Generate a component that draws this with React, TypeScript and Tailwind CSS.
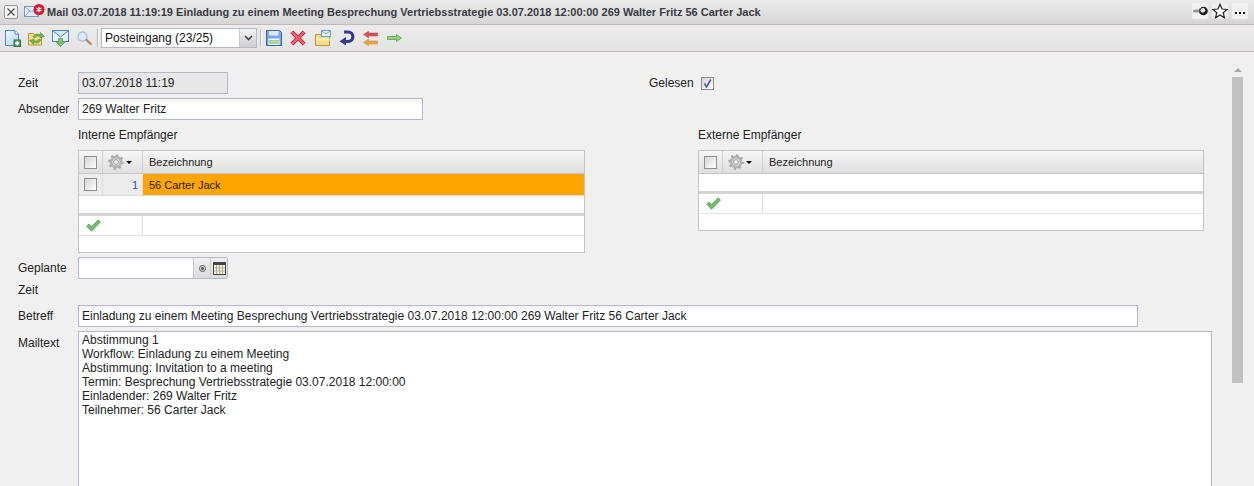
type IconProps = { className?: string };

function NewDocIcon() {
  return (
    <svg width="16" height="17" viewBox="0 0 16 17">
      <defs>
        <linearGradient id="docFill" x1="0" y1="0" x2="1" y2="1">
          <stop offset="0" stopColor="#eef6fd" />
          <stop offset="1" stopColor="#b4d4f0" />
        </linearGradient>
      </defs>
      <path d="M.5.500h9.500l3.500 3.500v11.500H.5z" fill="url(#docFill)" stroke="#4a8ac8" />
      <path d="M10 .5v3.500h3.500" fill="#fff" stroke="#4a8ac8" />
      <rect x="9" y="10" width="6.500" height="6.500" fill="#5aa564" stroke="#2f6e39" />
      <path d="M12.200 11.300v4M10.200 13.300h4" stroke="#fff" strokeWidth="1.500" />
    </svg>
  );
}

function FolderSyncIcon() {
  return (
    <svg width="17" height="15" viewBox="0 0 17 15">
      <path d="M.5 2.500h5l1 1.500h7v10H.5z" fill="#f7dd8a" stroke="#bd9338" />
      <path d="M5 6c2-3.500 5.500-3.500 7.500-2V1.500L16.500 5.500 12 7V5.500C10 4.500 8 5 7 7z" fill="#6cb84f" stroke="#478c38" strokeWidth=".5" />
      <path d="M13 9c-2 3.500-5.500 3.500-7.500 2v2.500L1.500 9.500 6 8v1.500c2 1 4 .5 5-1.500z" fill="#6cb84f" stroke="#478c38" strokeWidth=".5" />
    </svg>
  );
}

function MailDownIcon() {
  return (
    <svg width="17" height="17" viewBox="0 0 17 17">
      <rect x=".5" y=".5" width="16" height="11" fill="#e8f1fb" stroke="#4a86c6" />
      <path d="M1 1l7.500 6L16 1" fill="#d4e5f7" stroke="#4a86c6" />
      <path d="M6.500 8.500h4v3.500h2.500l-4.500 4.500L4 12h2.500z" fill="#7cc464" stroke="#4f9a3e" strokeWidth=".6" />
    </svg>
  );
}

function SearchIcon() {
  return (
    <svg width="15" height="14" viewBox="0 0 15 14">
      <circle cx="5.500" cy="5.500" r="4.500" fill="#dbe9f8" stroke="#a5c4e4" strokeWidth="1.400" />
      <path d="M9.500 9l4.300 4" stroke="#b5834f" strokeWidth="2.200" strokeLinecap="round" />
    </svg>
  );
}

function SaveIcon() {
  return (
    <svg width="16" height="16" viewBox="0 0 16 16">
      <path d="M.5.500h13l2 2v13H.5z" fill="#7aa8e0" stroke="#3564ac" />
      <rect x="3" y="1" width="9.500" height="4.500" fill="#dfe9f6" />
      <rect x="2.500" y="8.500" width="11" height="6.500" fill="#f2f6ee" />
      <path d="M3 10.800h10M3 12.800h10" stroke="#82bf7b" strokeWidth="1.300" />
    </svg>
  );
}

function DeleteIcon() {
  return (
    <svg width="16" height="16" viewBox="0 0 16 16">
      <path d="M1.800 1.800l12.400 12.400M14.200 1.800L1.800 14.200" stroke="#a8222e" strokeWidth="4" />
      <path d="M1.800 1.800l12.400 12.400M14.200 1.800L1.800 14.200" stroke="#f0616d" strokeWidth="2.400" />
    </svg>
  );
}

function FolderMailIcon() {
  return (
    <svg width="16" height="16" viewBox="0 0 16 16">
      <path d="M.5 4.500h5l1 1.500h8v9.500H.5z" fill="#f7dc85" stroke="#c2973a" />
      <path d="M1 9.500h13.500" stroke="#fbeeb8" strokeWidth="2.500" />
      <rect x="6.500" y=".5" width="9" height="6" fill="#e7f0fa" stroke="#6d9fd6" />
      <path d="M7 1l4 3 4-3" fill="none" stroke="#6d9fd6" />
    </svg>
  );
}

function UndoIcon() {
  return (
    <svg width="16" height="16" viewBox="0 0 16 16">
      <path d="M5 2h4c6.500 0 6.500 9.500 0 9.500H6" fill="none" stroke="#3a3791" strokeWidth="3.200" />
      <path d="M7 7v8.500L.5 11.300z" fill="#3a3791" />
    </svg>
  );
}

function SwapIcon() {
  return (
    <svg width="15" height="15" viewBox="0 0 15 15">
      <path d="M14.500 2H5.500V.3L.5 3.500l5 3.200V5h9z" fill="#d9535c" stroke="#b23a44" strokeWidth=".5" />
      <path d="M14.500 10H5.500V8.300L.5 11.500l5 3.200V13h9z" fill="#eea63a" stroke="#c9862a" strokeWidth=".5" />
    </svg>
  );
}

function ArrowRightIcon() {
  return (
    <svg width="15" height="8" viewBox="0 0 15 8">
      <path d="M.5 2.500h9V.5L14.500 4l-5 3.500v-2h-9z" fill="#93d07f" stroke="#5fa552" strokeWidth=".8" />
    </svg>
  );
}

function GearIcon() {
  return (
    <svg width="16" height="16" viewBox="0 0 16 16">
      <circle cx="8" cy="8" r="5" fill="none" stroke="#b5b5b5" strokeWidth="2.800" />
      <circle cx="8" cy="8" r="6.800" fill="none" stroke="#a5a5a5" strokeWidth="2" strokeDasharray="2.100 3.240" />
      <circle cx="8" cy="8" r="2.400" fill="#f0f0f0" stroke="#9a9a9a" />
    </svg>
  );
}

function CheckIcon() {
  return (
    <svg width="15" height="13" viewBox="0 0 15 13">
      <path d="M.7 7.300L3 5l2.500 2.600L12.200.8 14.500 3l-9 9.300z" fill="#74bd6c" stroke="#4a9450" strokeWidth=".7" />
    </svg>
  );
}

function CalendarIcon() {
  return (
    <svg width="13" height="13" viewBox="0 0 13 13">
      <rect x=".5" y=".5" width="12" height="12" fill="#f3f0d6" stroke="#444" />
      <rect x="1" y="1" width="11" height="2" fill="#444" />
      <path d="M3.500 3v9M6.500 3v9M9.500 3v9M1 6h11M1 9h11" stroke="#a5a58c" strokeWidth=".8" />
    </svg>
  );
}

function PinIcon() {
  return (
    <svg width="15" height="10" viewBox="0 0 15 10">
      <rect x="0" y="3.500" width="8" height="3" rx="1.500" fill="#9a9a9a" />
      <rect x="6" y="2.500" width="3" height="5" fill="#8a8a8a" />
      <circle cx="10.500" cy="5" r="4.300" fill="#1f1f1f" />
      <circle cx="9.800" cy="4.300" r="2.400" fill="#e5e5e5" />
    </svg>
  );
}

function StarIcon() {
  return (
    <svg width="16" height="16" viewBox="0 0 16 16">
      <path d="M8 1.300l2 4.700 5 .4-3.800 3.300 1.200 5L8 12l-4.400 2.700 1.200-5L1 6.400 6 6z" fill="#fff" stroke="#222" strokeWidth="1.200" />
    </svg>
  );
}

function MailTitleIcon() {
  return (
    <svg width="21" height="13" viewBox="0 0 21 13" className="-mt-[3px]">
      <rect x=".5" y="2.500" width="14" height="10" fill="#e4eefa" stroke="#6d9ad2" />
      <path d="M1 3l6.500 5L14 3M1 12l4.500-5M14 12l-4.500-5" fill="none" stroke="#6d9ad2" strokeWidth=".8" />
      <circle cx="15" cy="5.500" r="5.500" fill="#e3142b" />
      <path d="M15 2.700v5.600M12.600 4.100l4.800 2.800M17.400 4.100l-4.800 2.800" stroke="#fff" strokeWidth="1.200" />
    </svg>
  );
}

function CheckBox({ checked, className }: IconProps & { checked?: boolean }) {
  return (
    <span
      className={`flex h-[13px] w-[13px] shrink-0 items-center justify-center border border-[#8f8f8f] bg-gradient-to-br from-[#d4d4d4] to-white ${className ?? ''}`}
    >
      {checked && (
        <svg width="9" height="9" viewBox="0 0 9 9">
          <path d="M1.500 4.500L3.500 8 7.800 .5" fill="none" stroke="#4a5ea8" strokeWidth="1.600" />
        </svg>
      )}
    </span>
  );
}

function ToolSeparator({ className }: IconProps) {
  return <span className={`h-[18px] w-[2px] border-x border-l-[#b5b5b5] border-r-white ${className ?? ''}`} />;
}

function Recipients({
  title,
  rows,
  widthClass,
}: {
  title: string;
  rows: string[];
  widthClass: string;
}) {
  return (
    <div className={widthClass}>
      <div className="h-[22px] text-[12px] leading-[14px] text-[#222]">{title}</div>
      <div className="border border-[#c4c4c4] bg-white">
        <div className="flex h-[23px] border-b border-[#c8c8c8] bg-gradient-to-b from-[#f6f6f6] to-[#dfdfdf]">
          <div className="flex w-[24px] items-center justify-center border-r border-[#cfcfcf]">
            <CheckBox />
          </div>
          <div className="flex w-[40px] items-center gap-[2px] border-r border-[#cfcfcf] pl-[5px]">
            <GearIcon />
            <span className="h-0 w-0 border-x-[3px] border-t-[3px] border-x-transparent border-t-black" />
          </div>
          <div className="flex items-center pl-[6px] text-[11px] text-[#222]">Bezeichnung</div>
        </div>
        {rows.map((row) => (
          <div key={row} className="flex h-[22px] border-b border-[#dcdcdc]">
            <div className="flex w-[24px] items-center justify-center border-r border-[#dcdcdc] bg-[#ececec]">
              <CheckBox />
            </div>
            <div className="flex w-[40px] items-center justify-end border-r border-[#dcdcdc] bg-[#ececec] pr-[4px] pt-[1px] text-[11px] text-[#2447e0]">
              1
            </div>
            <div className="flex flex-1 items-center bg-[#ffa500] pl-[6px] pt-[1px] text-[11px] text-[#222]">{row}</div>
          </div>
        ))}
        <div className="h-[20px] border-b-[3px] border-[#d4d4d4]" />
        <div className="flex h-[20px] border-b border-[#e4e4e4]">
          <div className="flex w-[64px] items-center border-r border-[#dcdcdc] pl-[7px]">
            <CheckIcon />
          </div>
        </div>
        <div className="h-[16px]" />
      </div>
    </div>
  );
}

export default function App() {
  const mailLines = [
    'Abstimmung 1',
    'Workflow: Einladung zu einem Meeting',
    'Abstimmung: Invitation to a meeting',
    'Termin: Besprechung Vertriebsstrategie 03.07.2018 12:00:00',
    'Einladender: 269 Walter Fritz',
    'Teilnehmer: 56 Carter Jack',
  ];

  return (
    <div className="h-[486px] w-[1254px] overflow-hidden bg-[#f0f0f0] font-['Liberation_Sans',sans-serif] text-[12px] text-[#222]">
      {/* title bar */}
      <div className="flex h-[25px] items-center border-b border-[#c4b8bc] bg-gradient-to-b from-[#ececec] to-[#d6d6d6] pl-[4px] pr-[6px]">
        <span className="flex h-[14px] w-[14px] items-center justify-center rounded-[2px] border border-[#9a9a9a] bg-[#f4f4f4]">
          <svg width="8" height="8" viewBox="0 0 8 8">
            <path d="M.5.500l7 7M7.500.500l-7 7" stroke="#444" strokeWidth="1.100" />
          </svg>
        </span>
        <span className="ml-[6px] flex">
          <MailTitleIcon />
        </span>
        <span className="ml-[2px] whitespace-nowrap text-[11px] font-bold text-[#3a3a44]">
          Mail 03.07.2018 11:19:19 Einladung zu einem Meeting Besprechung Vertriebsstrategie 03.07.2018 12:00:00 269 Walter Fritz 56 Carter Jack
        </span>
        <div className="mb-[2px] ml-auto flex gap-[4px]">
          <span className="flex h-[16px] w-[16px] items-center justify-center rounded-[2px] bg-[#f0f0f0]">
            <PinIcon />
          </span>
          <span className="flex h-[16px] w-[16px] items-center justify-center rounded-[2px] bg-[#f0f0f0]">
            <StarIcon />
          </span>
          <span className="flex h-[16px] w-[16px] items-center justify-center gap-[2px] rounded-[2px] bg-[#f0f0f0] pt-[4px]">
            <span className="h-[2px] w-[2px] bg-black" />
            <span className="h-[2px] w-[2px] bg-black" />
            <span className="h-[2px] w-[2px] bg-black" />
          </span>
        </div>
      </div>

      {/* toolbar */}
      <div className="flex h-[27px] items-center border-b border-[#c4b8bc] bg-gradient-to-b from-[#ececec] to-[#e4e4e4] pl-[5px]">
        <span className="flex w-[23px]">
          <NewDocIcon />
        </span>
        <span className="flex w-[24px]">
          <FolderSyncIcon />
        </span>
        <span className="flex w-[25px]">
          <MailDownIcon />
        </span>
        <span className="flex w-[15px]">
          <SearchIcon />
        </span>
        <ToolSeparator className="ml-[5px]" />
        <div className="ml-[2px] flex h-[20px] w-[156px] items-stretch border border-[#b5b8c8] bg-white">
          <span className="flex-1 pl-[3px] text-[12px] leading-[18px] text-[#111]">Posteingang (23/25)</span>
          <span className="flex w-[17px] items-center justify-center border-l border-[#c8c8c8] bg-gradient-to-b from-[#f2f2f2] to-[#cfcfcf]">
            <svg width="9" height="6" viewBox="0 0 9 6">
              <path d="M1 1l3.500 3.500L8 1" fill="none" stroke="#444" strokeWidth="1.600" />
            </svg>
          </span>
        </div>
        <ToolSeparator className="ml-[3px]" />
        <span className="ml-[4px] flex w-[24px]">
          <SaveIcon />
        </span>
        <span className="flex w-[25px]">
          <DeleteIcon />
        </span>
        <span className="flex w-[24px]">
          <FolderMailIcon />
        </span>
        <span className="flex w-[24px]">
          <UndoIcon />
        </span>
        <span className="flex w-[24px]">
          <SwapIcon />
        </span>
        <span className="flex w-[15px]">
          <ArrowRightIcon />
        </span>
      </div>

      <div className="flex">
        {/* form */}
        <div className="w-[1232px] pl-[18px] pt-[20px]">
          <div className="flex h-[22px] items-center">
            <span className="w-[60px]">Zeit</span>
            <div className="flex h-[22px] w-[150px] items-center border border-[#b5b8c8] bg-[#e8e8e8] pl-[3px]">
              03.07.2018 11:19
            </div>
            <span className="ml-[421px] w-[52px]">Gelesen</span>
            <CheckBox checked />
          </div>

          <div className="mt-[4px] flex h-[22px] items-center">
            <span className="w-[60px]">Absender</span>
            <div className="flex h-[22px] w-[345px] items-center border border-[#b5b8c8] bg-gradient-to-b from-[#f3f3f3] to-white to-30% pl-[3px]">
              269 Walter Fritz
            </div>
          </div>

          <div className="ml-[60px] mt-[8px] flex gap-[113px]">
            <Recipients title="Interne Empfänger" rows={['56 Carter Jack']} widthClass="w-[507px]" />
            <Recipients title="Externe Empfänger" rows={[]} widthClass="w-[506px]" />
          </div>

          <div className="mt-[4px] flex h-[22px]">
            <span className="w-[60px] leading-[22px]">
              Geplante
              <span className="block">Zeit</span>
            </span>
            <div className="flex h-[22px] w-[150px] rounded-r-[2px] border border-[#b5b8c8] bg-gradient-to-b from-[#f3f3f3] to-white to-30%">
              <span className="flex-1" />
              <span className="flex w-[17px] items-center justify-center border-l border-[#c8c8c8] bg-gradient-to-b from-[#f0f0f0] to-[#dcdcdc]">
                <span className="flex h-[7px] w-[7px] items-center justify-center rounded-full border border-[#555]">
                  <span className="h-[3px] w-[3px] rounded-full bg-[#555]" />
                </span>
              </span>
              <span className="flex w-[17px] items-center justify-center border-l border-[#c8c8c8] bg-gradient-to-b from-[#f0f0f0] to-[#dcdcdc]">
                <CalendarIcon />
              </span>
            </div>
          </div>

          <div className="mt-[26px] flex h-[22px] items-center">
            <span className="w-[60px]">Betreff</span>
            <div className="flex h-[22px] w-[1060px] items-center border border-[#b5b8c8] bg-gradient-to-b from-[#f3f3f3] to-white to-30% pl-[3px]">
              Einladung zu einem Meeting Besprechung Vertriebsstrategie 03.07.2018 12:00:00 269 Walter Fritz 56 Carter Jack
            </div>
          </div>

          <div className="mt-[4px] flex">
            <span className="w-[60px] pt-[3px]">Mailtext</span>
            <div className="h-[200px] w-[1134px] border border-[#b5b8c8] bg-white px-[3px] pt-[1px] leading-[14px]">
              {mailLines.map((line) => (
                <div key={line}>{line}</div>
              ))}
            </div>
          </div>
        </div>

        {/* scrollbar */}
        <div className="flex w-[11px] flex-col items-center pt-[16px]">
          <span className="h-0 w-0 border-x-[4px] border-b-[4px] border-x-transparent border-b-[#a8a8a8]" />
          <span className="mt-[5px] h-[306px] w-[11px] shrink-0 bg-[#c1c1c1]" />
        </div>
      </div>
    </div>
  );
}
